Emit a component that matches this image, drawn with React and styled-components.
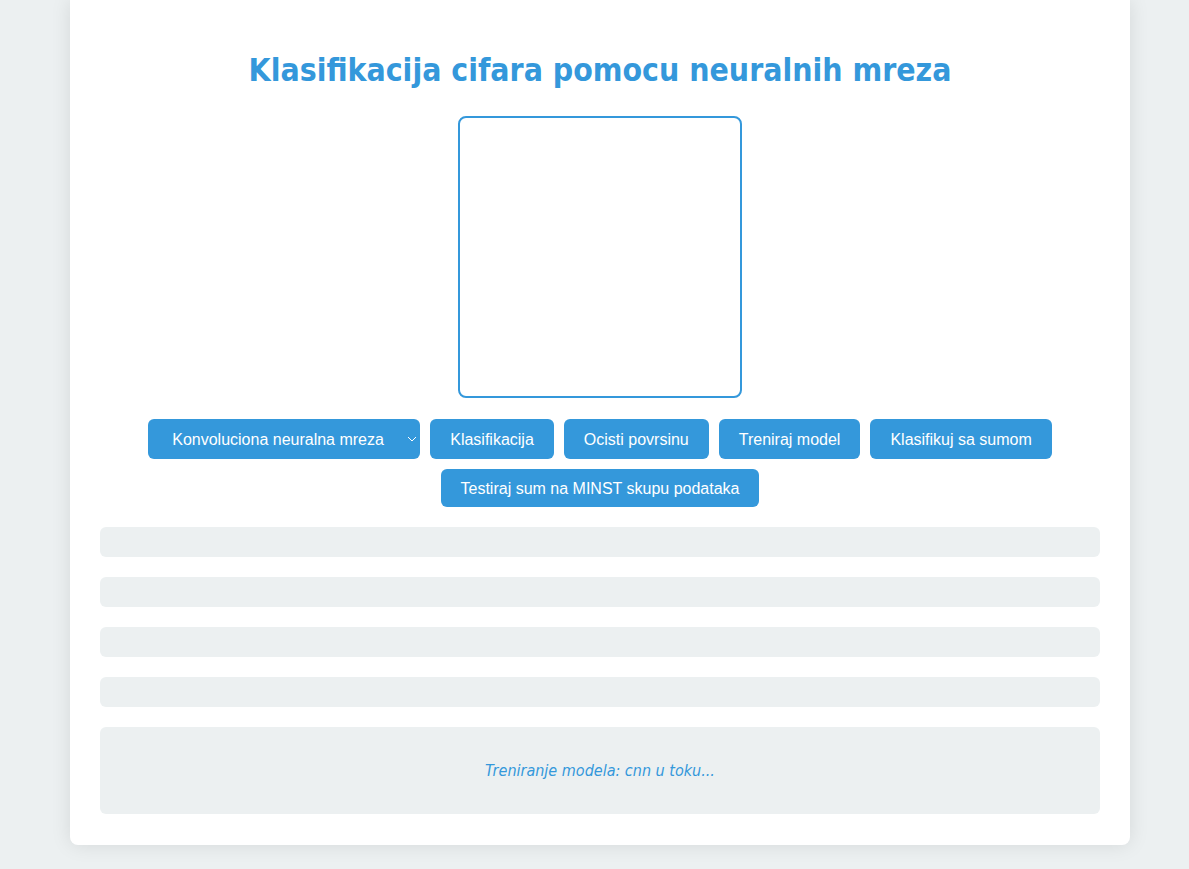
import React from 'react';
import styled, { createGlobalStyle } from 'styled-components';

const GlobalStyle = createGlobalStyle`
  html, body {
    margin: 0;
    padding: 0;
    background: #ecf0f1;
  }
  body {
    font-family: "Liberation Sans", Arial, sans-serif;
  }
`;

const Page = styled.div`
  padding: 0 0 24px 11px;
`;

const Card = styled.main`
  width: 1000px;
  margin: 0 auto;
  padding: 51px 30px 31px;
  background: #ffffff;
  border-radius: 0 0 8px 8px;
  box-shadow: 0 0 20px rgba(0, 0, 0, 0.1);
  display: flex;
  flex-direction: column;
  align-items: center;
`;

const Title = styled.h1`
  margin: 0 0 27px;
  font-family: "DejaVu Sans Condensed", "DejaVu Sans", Verdana, sans-serif;
  font-stretch: condensed;
  font-weight: bold;
  font-size: 31.7px;
  line-height: 38px;
  color: #3498db;
  text-align: center;
`;

const Canvas = styled.canvas`
  display: block;
  width: 280px;
  height: 278px;
  border: 2px solid #3498db;
  border-radius: 8px;
  background: #ffffff;
  margin-bottom: 21px;
`;

const Controls = styled.div`
  display: flex;
  flex-wrap: wrap;
  justify-content: center;
  gap: 10px;
  width: 920px;
`;

const SelectWrap = styled.div`
  position: relative;
  width: 272px;
  height: 40px;
`;

const Select = styled.select`
  appearance: none;
  width: 100%;
  height: 100%;
  border: none;
  border-radius: 6px;
  background: #3498db;
  color: #ffffff;
  font-family: "Liberation Sans", Arial, sans-serif;
  font-size: 16px;
  padding: 1px 24px 0;
  outline: none;
`;

const Chevron = styled.svg`
  position: absolute;
  right: 3px;
  top: 17px;
  pointer-events: none;
`;

const Button = styled.button`
  height: ${p => (p.tall ? 40 : 38)}px;
  padding: 1px 20px 0;
  border: none;
  border-radius: 6px;
  background: #3498db;
  color: #ffffff;
  font-family: "Liberation Sans", Arial, sans-serif;
  font-size: 16px;
  cursor: pointer;
`;

const Bars = styled.div`
  align-self: stretch;
  display: flex;
  flex-direction: column;
  gap: 20px;
  margin-top: 20px;
`;

const Bar = styled.div`
  height: 30px;
  border-radius: 6px;
  background: #ecf0f1;
`;

const Status = styled.div`
  height: 87px;
  border-radius: 6px;
  background: #ecf0f1;
  display: flex;
  align-items: center;
  justify-content: center;
  font-family: "DejaVu Sans Condensed", "DejaVu Sans", Verdana, sans-serif;
  font-stretch: condensed;
  font-style: italic;
  font-size: 16px;
  color: #3498db;
`;

export default function App() {
  return (
    <Page>
      <GlobalStyle />
      <Card>
        <Title>Klasifikacija cifara pomocu neuralnih mreza</Title>
        <Canvas width={280} height={278} />
        <Controls>
          <SelectWrap>
            <Select defaultValue="cnn">
              <option value="cnn">Konvoluciona neuralna mreza</option>
              <option value="mlp">Visoslojni perceptron</option>
            </Select>
            <Chevron width="10" height="6" viewBox="0 0 10 6">
              <path d="M1 1l4 4 4-4" fill="none" stroke="#ffffff" strokeWidth="1" />
            </Chevron>
          </SelectWrap>
          <Button tall>Klasifikacija</Button>
          <Button tall>Ocisti povrsinu</Button>
          <Button tall>Treniraj model</Button>
          <Button tall>Klasifikuj sa sumom</Button>
          <Button>Testiraj sum na MINST skupu podataka</Button>
        </Controls>
        <Bars>
          <Bar />
          <Bar />
          <Bar />
          <Bar />
          <Status>Treniranje modela: cnn u toku...</Status>
        </Bars>
      </Card>
    </Page>
  );
}
